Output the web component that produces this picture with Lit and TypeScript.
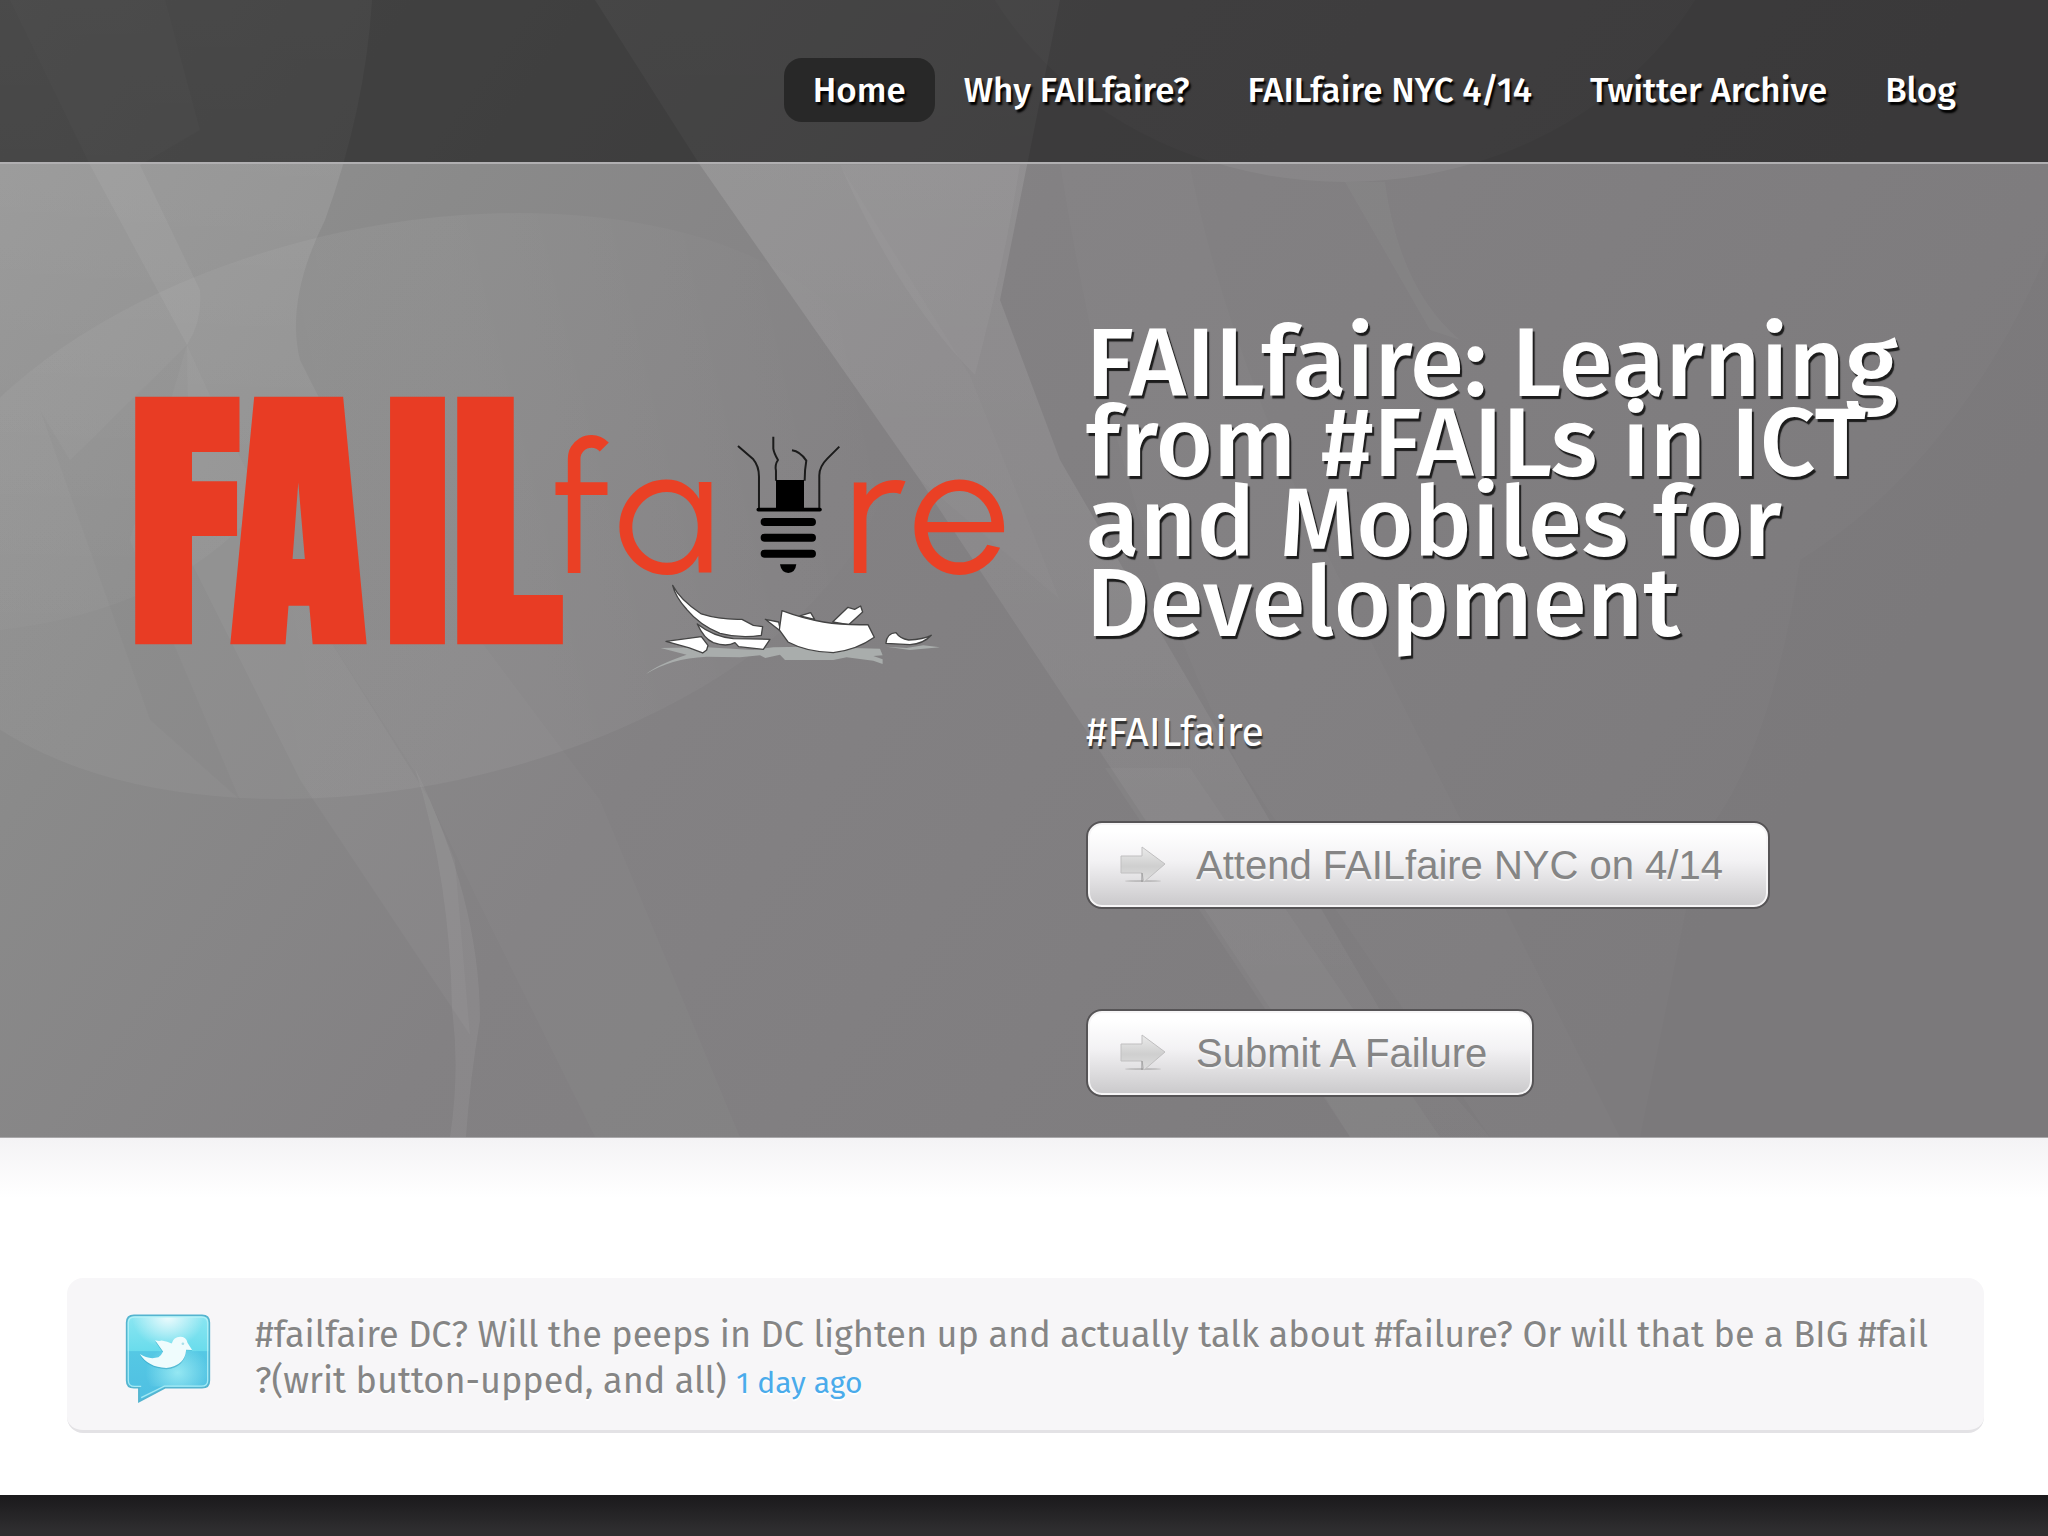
import { LitElement, html, css, svg } from "lit";
import { customElement, property } from "lit/decorators.js";
import { classMap } from "lit/directives/class-map.js";

const SANS = css`"Trebuchet MS", "Fira Sans", "Open Sans", sans-serif`;

@customElement("hero-backdrop")
class HeroBackdrop extends LitElement {
  static styles = css`
    :host { display: block; }
    svg { display: block; width: 100%; height: 100%; }
  `;
  render() {
    return html`
      <svg viewBox="0 0 2048 1137" preserveAspectRatio="none" aria-hidden="true">
        <defs>
          <linearGradient id="base" x1="0" y1="0" x2="1" y2="0.4">
            <stop offset="0" stop-color="#949494"></stop>
            <stop offset="0.25" stop-color="#8a8a8a"></stop>
            <stop offset="0.5" stop-color="#838183"></stop>
            <stop offset="1" stop-color="#7d7b7d"></stop>
          </linearGradient>
          <linearGradient id="fade" x1="0" y1="0" x2="0" y2="1">
            <stop offset="0" stop-color="#fff" stop-opacity="0.12"></stop>
            <stop offset="1" stop-color="#fff" stop-opacity="0.02"></stop>
          </linearGradient>
          <linearGradient id="disc" x1="0" y1="0" x2="1" y2="0">
            <stop offset="0" stop-color="#fff" stop-opacity="0.04"></stop>
            <stop offset="0.6" stop-color="#fff" stop-opacity="0.05"></stop>
            <stop offset="1" stop-color="#fff" stop-opacity="0"></stop>
          </linearGradient>
        </defs>
        <rect width="2048" height="1137" fill="url(#base)"></rect>
        <ellipse cx="400" cy="506" rx="500" ry="280" transform="rotate(-12 400 506)" fill="url(#disc)"></ellipse>
        <path d="M0 0H372Q365 110 325 220Q285 300 300 360L320 400Q250 600 0 630Z" fill="url(#fade)"></path>
        <path d="M10 0H165L200 130L140 165L200 290Q203 320 187 345L90 165Z" fill="#fff" opacity="0.05"></path>
        <path d="M187 345L70 460L40 410L150 720L240 800L130 540Z" fill="#000" opacity="0.015"></path>
        <path d="M187 345L212 400L330 640L430 800L455 860L470 1035L300 780L190 560Z" fill="#fff" opacity="0.035"></path>
        <path d="M330 640L480 640L600 800L740 1137H595L480 905L420 780Z" fill="#fff" opacity="0.025"></path>
        <path d="M415 768Q480 900 480 1020Q470 1080 466 1137H450Q460 1070 452 1010Q450 880 415 768Z" fill="#fff" opacity="0.06"></path>
        <path d="M595 0H1060L1000 300L1060 460L1380 1010L1490 1137H1350L1270 1008L920 480L700 165Z" fill="url(#fade)"></path>
        <path d="M840 165H1020Q1005 260 975 375Q900 300 840 165Z" fill="#fff" opacity="0.04"></path>
        <path d="M700 165H840L970 375L1060 600L920 480Z" fill="#fff" opacity="0.02"></path>
        <path d="M1060 165H1190Q1220 320 1310 520L1620 1137H1490L1240 768Q1120 540 1060 165Z" fill="#fff" opacity="0.02"></path>
        <path d="M1105 768H1190L1440 1137H1350Z" fill="#fff" opacity="0.03"></path>
        <path d="M1345 182H1385Q1400 290 1460 340L1430 330Z" fill="#fff" opacity="0.03"></path>
        <ellipse cx="1345" cy="-170" rx="400" ry="352" fill="#fff" opacity="0.05"></ellipse>
        <path d="M2048 250Q1960 460 1800 560Q1770 760 1700 840L1640 1137H2048Z" fill="#000" opacity="0.015"></path>
      </svg>`;
  }
}

@customElement("site-logo")
class SiteLogo extends LitElement {
  static styles = css`
    :host { display: block; }
    svg { display: block; width: 100%; height: auto; overflow: visible; }
    .fail { font: 700 278px "Anton", "Open Sans Condensed", "Open Sans", sans-serif; fill: #e83c24; }
    .faire { font: 400 180px "Urbanist", "Questrial", "Open Sans", sans-serif; fill: #ea4025; }
  `;
  render() {
    return html`
      <svg viewBox="135 390 870 295" role="img" aria-label="FAILfaire">
        <text class="fail" x="129" y="640">F</text>
        <text class="fail" x="231" y="640">A</text>
        <text class="fail" x="386" y="640">I</text>
        <text class="fail" x="451" y="640">L</text>
        <text class="faire" x="551" y="573">f</text>
        <text class="faire" x="614" y="573">a</text>
        <text class="faire" x="843" y="573">r</text>
        <text class="faire" x="909" y="573">e</text>
        <g transform="translate(540 420) scale(.3333)" stroke-linejoin="round">
          <g fill="none" stroke="#1b1b1b" stroke-width="6">
            <path d="M594 78L640 118Q657 138 657 170V268"></path>
            <path d="M700 50V86Q702 100 714 120Q704 134 708 152V182"></path>
            <path d="M756 91Q780 94 799 122Q794 150 794 182"></path>
            <path d="M898 80L862 116Q838 140 838 166V268"></path>
          </g>
          <path d="M708 180H792V268H708Z" fill="#000"></path>
          <g stroke="#000" stroke-linecap="round">
            <path d="M655 269H840" stroke-width="11"></path>
            <path d="M674 306H816M674 353H816M674 401H816" stroke-width="24"></path>
          </g>
          <path d="M720 433H769Q766 458 745 459Q724 458 720 433Z" fill="#000"></path>
          <g fill="#a9adac">
            <path d="M318 762Q350 735 440 704L362 684L500 682L640 690L700 682L790 680L1020 686L1028 706L1000 708L1028 718V732L1000 722L920 712L880 720H735L720 704L676 714L660 706L600 712L500 710Q390 716 318 762Z"></path>
            <path d="M1040 680L1100 684L1150 676L1200 682L1110 690Z"></path>
          </g>
          <g fill="#fff" stroke="#444" stroke-width="4">
            <path d="M378 664L484 650L504 676L500 690L488 699L448 684Z"></path>
            <path d="M472 612Q520 650 580 656L690 658L670 688L596 680L585 668Q560 682 520 668Q492 656 472 612Z"></path>
            <path d="M398 496Q420 540 484 582Q540 600 606 598L640 616L668 620L664 646Q600 656 540 640Q480 616 440 568Q406 530 398 496Z"></path>
            <path d="M676 598L716 606L722 634Z"></path>
            <path d="M780 588L812 578L824 598Z"></path>
            <path d="M878 606L924 562L944 568L962 558L968 576L926 614Z"></path>
            <path d="M726 572Q790 596 850 606Q910 616 984 614L1003 652Q950 690 880 698Q800 696 744 666L718 630Z"></path>
            <path d="M1038 670Q1040 640 1068 638Q1080 656 1106 660Q1150 658 1174 646Q1150 672 1110 674Z"></path>
          </g>
        </g>
      </svg>`;
  }
}

const arrow = svg`
  <svg class="arrow" viewBox="0 0 48 40" aria-hidden="true">
    <defs>
      <linearGradient id="a" x1="0" y1="0" x2="0" y2="1">
        <stop offset="0" stop-color="#ebebeb"></stop>
        <stop offset=".55" stop-color="#cfcfcf"></stop>
        <stop offset="1" stop-color="#dedede"></stop>
      </linearGradient>
    </defs>
    <ellipse cx="24" cy="36" rx="18" ry="1" fill="#bdbcbd"></ellipse>
    <path d="M2 11H23V2L46 19L25 37L23 28H2Z" fill="url(#a)" stroke="#c0bfc0"></path>
    <path d="M23 28V37" stroke="#8f8f8f"></path>
  </svg>`;

@customElement("action-link")
class ActionLink extends LitElement {
  @property() label = "";
  static styles = css`
    :host { display: block; }
    a {
      display: inline-flex; align-items: center; gap: 29px; box-sizing: border-box;
      height: 88px; padding: 0 45px 0 31px; border-radius: 16px;
      border: 2px solid #565456; box-shadow: inset 0 0 0 2px #f6f5f6;
      background: linear-gradient(#ffffff 10%, #f3f2f4 45%, #c9c8ca);
      color: #858585; text-decoration: none; text-shadow: 0 2px 0 #f4f4f4;
      font: 40px/48px "Liberation Sans", Arial, sans-serif;
    }
    .arrow { width: 48px; height: 40px; }
  `;
  render() {
    return html`<a href="#">${arrow}<span>${this.label}</span></a>`;
  }
}

@customElement("tweet-card")
class TweetCard extends LitElement {
  static styles = css`
    :host { display: block; }
    .card {
      display: flex; align-items: flex-start; gap: 44px; padding: 34px 48px 24px 58px;
      border-radius: 16px; background: #f7f6f8; border-bottom: 3px solid #e3e2e5;
    }
    svg { flex: none; width: 86px; height: 92px; }
    p { margin: 0; color: #858585; font: 36px/46px ${SANS}; text-shadow: 0 2px 0 #fff; }
    a { color: #4aabeb; font-size: 30px; text-decoration: none; }
  `;
  render() {
    return html`
      <div class="card">
        <svg viewBox="15 36 260 272" aria-hidden="true">
          <defs>
            <linearGradient id="b" x1="0" y1="0" x2="0" y2="1">
              <stop offset="0" stop-color="#8be6f2"></stop>
              <stop offset=".41" stop-color="#6adcec"></stop>
              <stop offset=".42" stop-color="#55c8e4"></stop>
              <stop offset="1" stop-color="#4fbfe2"></stop>
            </linearGradient>
            <radialGradient id="g" cx=".5" cy="0" r=".45">
              <stop offset="0" stop-color="#fff" stop-opacity=".85"></stop>
              <stop offset="1" stop-color="#fff" stop-opacity="0"></stop>
            </radialGradient>
            <radialGradient id="h" cx=".62" cy=".8" r=".4">
              <stop offset="0" stop-color="#a5f0f6" stop-opacity=".8"></stop>
              <stop offset="1" stop-color="#a5f0f6" stop-opacity="0"></stop>
            </radialGradient>
          </defs>
          <path id="bubble" d="M42 43H248Q270 43 270 65V240Q270 262 248 262H136L57 304V262H42Q20 262 20 240V65Q20 43 42 43Z" fill="url(#b)" stroke="#55b4cf" stroke-width="5"></path>
          <rect x="24" y="47" width="242" height="211" rx="18" fill="url(#g)"></rect>
          <rect x="24" y="47" width="242" height="211" rx="18" fill="url(#h)"></rect>
          <path d="M64 258H44Q25 258 25 240V66Q25 48 44 48H246Q265 48 265 66V240Q265 257 246 257H134L64 292" fill="none" stroke="#b9f3f8" stroke-width="4" opacity=".8"></path>
          <path d="M60 164Q86 182 116 174Q126 166 130 156L106 122Q118 126 126 123Q144 126 156 132Q162 112 182 112Q200 112 204 130L218 150L200 149Q196 200 140 206Q84 204 60 164Z" fill="#2f9fc0" opacity=".55"></path>
          <path d="M60 160Q86 178 116 170Q126 162 130 152L106 118Q118 122 126 119Q144 122 156 128Q162 108 182 108Q200 108 204 126L218 148L200 147Q196 196 140 202Q84 200 60 160Z" fill="#effcfd"></path>
          <circle cx="190" cy="129" r="4" fill="#a8dfe9"></circle>
        </svg>
        <p>#failfaire DC? Will the peeps in DC lighten up and actually talk about #failure? Or will that be a BIG #fail ?(writ button-upped, and all) <a href="#">1 day ago</a></p>
      </div>`;
  }
}

@customElement("app-root")
class AppRoot extends LitElement {
  static styles = css`
    :host { display: flex; flex-direction: column; min-height: 100vh; background: #fff; font-family: ${SANS}; }
    .top { position: relative; border-bottom: 1px solid #a9a8aa; }
    hero-backdrop { position: absolute; inset: 0; }
    header {
      position: relative; display: flex; justify-content: flex-end; padding: 58px 63px 40px;
      background: rgba(0, 0, 0, 0.54); border-bottom: 2px solid #b0afb1;
    }
    nav { display: flex; }
    nav a {
      padding: 0 29px; border-radius: 18px; color: #fff; text-decoration: none;
      font-weight: 500; font-size: 35px; line-height: 64px; text-shadow: 2px 3px 2px #000;
    }
    nav a.current { background: #282828; }
    .hero { position: relative; display: grid; grid-template-columns: 8fr 7fr; padding: 159px 64px 40px; }
    site-logo { margin: 67px 83px 0 71px; }
    .pitch { display: flex; flex-direction: column; color: #fff; margin-left: -2px; }
    h1 { margin: 0 0 66px; font-size: 98px; line-height: 80px; font-weight: 500; text-shadow: 2px 3px 1px #1c1c1c; }
    .tag { margin: 0 0 64px; font-size: 41px; line-height: 48px; text-shadow: 1px 3px 1px #333; }
    .actions { display: grid; gap: 100px; }
    main { padding: 140px 64px 62px 67px; background: linear-gradient(#f4f3f5, #fff 60px); }
    footer { flex: 1; min-height: 42px; background: linear-gradient(#1a191b, #2f2e30 36px); }
  `;
  private links = ["Home", "Why FAILfaire?", "FAILfaire NYC 4/14", "Twitter Archive", "Blog"];
  render() {
    return html`
      <div class="top">
        <hero-backdrop></hero-backdrop>
        <header>
          <nav aria-label="Main">
            ${this.links.map((l, i) => html`<a href="#" class=${classMap({ current: i === 0 })}>${l}</a>`)}
          </nav>
        </header>
        <section class="hero">
          <site-logo></site-logo>
          <div class="pitch">
            <h1>FAILfaire: Learning from #FAILs in ICT and Mobiles for Development</h1>
            <p class="tag">#FAILfaire</p>
            <div class="actions">
              <action-link label="Attend FAILfaire NYC on 4/14"></action-link>
              <action-link label="Submit A Failure"></action-link>
            </div>
          </div>
        </section>
      </div>
      <main><tweet-card></tweet-card></main>
      <footer></footer>`;
  }
}
